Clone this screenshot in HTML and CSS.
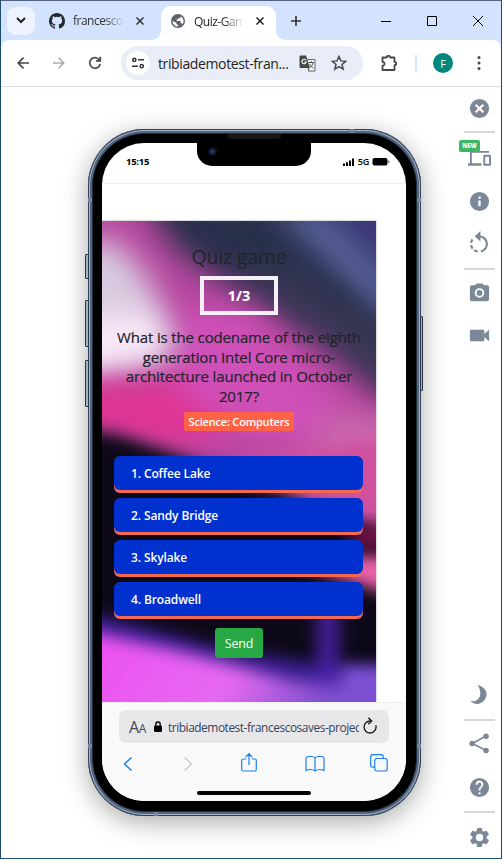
FILE: index.html
```html
<!DOCTYPE html>
<html lang="en">
<head>
<meta charset="utf-8">
<title>Quiz-Game</title>
<link rel="stylesheet" href="styles.css">
</head>
<body>
<div class="window">
  <header class="tabs">
    <button class="tab-search"><svg width="10" height="7" viewBox="0 0 10 7"><path d="M1 1l4 4 4-4" fill="none" stroke="#1f1f1f" stroke-width="2"/></svg></button>
    <div class="tab">
      <svg width="16" height="16" viewBox="0 0 16 16"><path fill="#24292f" d="M8 0C3.58 0 0 3.58 0 8c0 3.54 2.29 6.53 5.47 7.59.4.07.55-.17.55-.38v-1.49c-2.01.37-2.53-.49-2.69-.94-.09-.23-.48-.94-.82-1.13-.28-.15-.68-.52-.01-.53.63-.01 1.08.58 1.23.82.72 1.21 1.87.87 2.33.66.07-.52.28-.87.51-1.07-1.78-.2-3.64-.89-3.64-3.95 0-.87.31-1.59.82-2.15-.08-.2-.36-1.02.08-2.12 0 0 .67-.21 2.2.82a7.6 7.6 0 0 1 4 0c1.53-1.04 2.2-.82 2.2-.82.44 1.1.16 1.92.08 2.12.51.56.82 1.27.82 2.15 0 3.07-1.87 3.75-3.65 3.95.29.25.54.73.54 1.48v2.2c0 .21.15.46.55.38A8 8 0 0 0 16 8c0-4.42-3.58-8-8-8z"/></svg>
      <span class="tab-title">francesco</span>
      <svg width="8" height="8" viewBox="0 0 8 8"><path d="M.5.5l7 7m0-7l-7 7" stroke="#333" stroke-width="1.5"/></svg>
    </div>
    <div class="tab tab-active">
      <svg width="14" height="14" viewBox="0 0 24 24"><path fill="#5f6368" d="M12 0a12 12 0 1 0 0 24 12 12 0 0 0 0-24zM2.4 12l6.9 3v2l3 2.4v2.2A9.600 9.600 0 0 1 2.400 12zm17.600 5.400c-.5-1-1.300-1.600-2.300-1.600h-1.200v-3.600H9.300V9.800h2.400V7.400h2.400c1.300 0 2.400-1.100 2.400-2.400v-1.300a9.600 9.600 0 0 1 3.500 13.700z"/></svg>
      <span class="tab-title">Quiz-Gam</span>
      <svg width="8" height="8" viewBox="0 0 8 8"><path d="M.5.5l7 7m0-7l-7 7" stroke="#222" stroke-width="1.5"/></svg>
    </div>
    <svg class="new-tab" width="10" height="10" viewBox="0 0 10 10"><path d="M5 0v10M0 5h10" stroke="#333" stroke-width="1.6"/></svg>
    <div class="controls">
      <svg width="10" height="10" viewBox="0 0 10 10"><path d="M0 5.500h10" stroke="#000"/></svg>
      <svg width="10" height="10" viewBox="0 0 10 10"><path d="M.5.5h9v9h-9z" fill="none" stroke="#000"/></svg>
      <svg width="10" height="10" viewBox="0 0 10 10"><path d="M0 0l10 10M10 0L0 10" stroke="#000"/></svg>
    </div>
  </header>
  <nav class="bar">
    <svg width="12" height="12" viewBox="0 0 12 12"><path d="M6.500.7L1.200 6l5.300 5.300M1.200 6H12" fill="none" stroke="#474747" stroke-width="1.700"/></svg>
    <svg class="forward" width="12" height="12" viewBox="0 0 12 12"><path d="M5.500.7L10.800 6l-5.300 5.300M10.800 6H0" fill="none" stroke="#aaa" stroke-width="1.500"/></svg>
    <svg class="reload" width="14" height="14" viewBox="0 0 14 14"><path d="M11.700 4.500A5.300 5.300 0 1 0 12.200 8M12.300.8v4H8.100" fill="none" stroke="#474747" stroke-width="1.700"/></svg>
    <div class="address">
      <span class="site"><svg width="12" height="12" viewBox="0 0 12 12"><g fill="none" stroke="#333" stroke-width="1.500"><circle cx="2.300" cy="2.800" r="1.600"/><path d="M6 2.800h6M0 9.200h6"/><circle cx="9.700" cy="9.200" r="1.600"/></g></svg></span>
      <span class="host">tribiademotest-fran...</span>
      <svg class="translate" width="17" height="17" viewBox="0 0 17 17"><path d="M8 4.500h8v11.500H9" fill="#f4f5fa" stroke="#666"/><path d="M1.500.5H7l4 12.500H1.500a1 1 0 0 1-1-1v-10.500a1 1 0 0 1 1-1z" fill="#474747"/><path d="M7 5.300A2.200 2.200 0 1 0 7.300 7H5.300" fill="none" stroke="#fff" stroke-width="1.100"/><path d="M9.500 7.500H15M12.300 6v1.500M14 8c-.5 2.300-2 4-3.500 5M10.800 9c.8 2 2 3 3.700 4M9 13l1 3" fill="none" stroke="#555"/></svg>
      <svg width="16" height="16" viewBox="0 0 16 16"><path d="M8 1.500l1.900 4.400 4.800.4-3.700 3.100 1.200 4.700L8 11.600l-4.200 2.500L5 9.400 1.300 6.300l4.800-.4z" fill="none" stroke="#474747" stroke-width="1.500"/></svg>
    </div>
    <svg class="ext" width="17" height="17" viewBox="0 0 17 17"><path d="M1.500 2.500h4.300a1.700 1.700 0 0 1 3.400 0h4.300v4.300a1.700 1.700 0 0 1 0 3.400V15h-12v-4.200a2 2 0 0 0 0-4z" fill="none" stroke="#474747" stroke-width="1.800" stroke-linejoin="round"/></svg>
    <i class="sep"></i>
    <span class="avatar">F</span>
    <svg width="4" height="16" viewBox="0 0 4 16"><g fill="#474747"><circle cx="2" cy="2.500" r="1.500"/><circle cx="2" cy="8" r="1.500"/><circle cx="2" cy="13.500" r="1.500"/></g></svg>
  </nav>
  <main class="stage">
    <section class="phone">
      <i class="key key-mute"></i><i class="key key-up"></i><i class="key key-down"></i><i class="key key-power"></i>
      <i class="seam seam-tr"></i><i class="seam seam-bl"></i><i class="seam seam-l1"></i><i class="seam seam-l2"></i><i class="seam seam-r1"></i><i class="seam seam-r2"></i>
      <div class="screen">
        <div class="status">
          <span class="time">15:15</span>
          <svg width="12" height="8" viewBox="0 0 12 8"><path d="M0 5.500h2V8H0zM3 4.300h2V8H3zM6 2.500h2V8H6zM9 .5h2V8H9z"/></svg>
          <span class="net">5G</span>
          <svg width="18" height="9" viewBox="0 0 18 9"><rect x=".5" y="1" width="15" height="7.500" rx="2"/><path d="M16.300 3.300q1.200.3 1.200 1.500t-1.200 1.500z" fill="#555"/></svg>
        </div>
        <div class="page">
          <article class="quiz">
            <svg class="art" width="274" height="481" viewBox="0 0 274 481" preserveAspectRatio="none">
              <defs>
                <filter id="b6" x="-50%" y="-50%" width="200%" height="200%" color-interpolation-filters="sRGB"><feGaussianBlur stdDeviation="8"/></filter>
                <filter id="b12" x="-50%" y="-50%" width="200%" height="200%" color-interpolation-filters="sRGB"><feGaussianBlur stdDeviation="15"/></filter>
                <filter id="beam" x="-200%" y="-50%" width="500%" height="200%" color-interpolation-filters="sRGB"><feGaussianBlur stdDeviation="8"/></filter>
                <linearGradient id="glow" x1="0" x2="1" y1="0" y2=".25"><stop offset="0" stop-color="#ee4df2"/><stop offset=".55" stop-color="#e66af0"/><stop offset=".85" stop-color="#8050d0"/></linearGradient>
              </defs>
              <rect width="274" height="481" fill="#29304c"/>
              <path d="M200-40H330V110L274 60z" fill="#3b3876" filter="url(#b12)"/>
              <path d="M165-20L300 110V72L220-10z" fill="#606aa8" filter="url(#b12)"/>
              <path d="M130 50L290 170V115L180 50z" fill="#3b3856" filter="url(#b12)"/>
              <path d="M-40-50L30-40 75 30 145 75 215 122 320 205V285L150 270-40 230z" fill="#b6479f" filter="url(#b12)"/>
              <path d="M75 85L150 95 240 180 220 230 60 200z" fill="#cf50b8" filter="url(#b12)"/>
              <path d="M-60 20L15 20 50 62 75 130 50 145-60 165z" fill="#d8cbe0" filter="url(#b12)"/>
              <path d="M-60 95L55 95 60 136-60 152z" fill="#fdeafa" filter="url(#b12)"/>
              <path d="M-60 166L70 160 130 210 70 225-60 200z" fill="#e03494" filter="url(#b12)"/>
              <path d="M225 190L310 200V290L200 260z" fill="#cb6aae" filter="url(#b12)"/>
              <path d="M-40 203L20 215 75 234 150 264 215 288 310 318V520H-40z" fill="#0d0918" filter="url(#b6)"/>
              <path d="M140 236L300 215V316L210 279z" fill="#cf509f" filter="url(#b6)"/>
              <path d="M180 336L300 334V376L230 355z" fill="#f062ac" filter="url(#b6)"/>
              <path d="M240 304H310V328H255z" fill="#701346" filter="url(#b6)"/>
              <path d="M-20 390L130 430 300 455V500H-20z" fill="#3c1f94" filter="url(#b6)"/>
              <path d="M214 375H238V500H214z" fill="#4a22a8" opacity=".85" filter="url(#beam)"/>
              <path d="M-20 409L80 431 190 460 300 472V520H-20z" fill="url(#glow)" filter="url(#b6)"/>
              <path d="M240 445H310V500H235z" fill="#7d50d2" filter="url(#b6)"/>
            </svg>
            <div class="content">
              <h1>Quiz game</h1>
              <div class="counter">1/3</div>
              <h2><span>What is the codename of the eighth</span><span>generation Intel Core micro-</span><span>architecture launched in October</span><span>2017?</span></h2>
              <span class="badge">Science: Computers</span>
              <ul class="answers"><li>1. Coffee Lake</li><li>2. Sandy Bridge</li><li>3. Skylake</li><li>4. Broadwell</li></ul>
              <button class="send">Send</button>
            </div>
          </article>
        </div>
        <footer class="safari">
          <div class="url"><span class="aa">A<small>A</small></span>
            <svg width="8" height="11" viewBox="0 0 8 11"><rect y="4.500" width="8" height="6.500" rx="1.200"/><path d="M1.800 5V3.200a2.200 2.200 0 0 1 4.400 0V5" fill="none" stroke="#000" stroke-width="1.300"/></svg>
            <span class="path">tribiademotest-francescosaves-projec</span>
            <svg class="again" width="14" height="17" viewBox="0 0 14 17"><path d="M12.800 8.300A6 6 0 1 1 7.500 4M5.300.800L8.700 4.100 5.300 7.300" fill="none" stroke="#111" stroke-width="1.300"/></svg>
          </div>
          <div class="tools">
            <svg width="10" height="22" viewBox="0 0 10 22"><path d="M8.500 5.500L1.500 12l7 6.500" fill="none" stroke="#1a80ef" stroke-width="1.500"/></svg>
            <svg class="next" width="10" height="22" viewBox="0 0 10 22"><path d="M1.500 5.500L8.500 12l-7 6.500" fill="none" stroke="#c7c7c9" stroke-width="1.300"/></svg>
            <svg class="share" width="16" height="22" viewBox="0 0 16 22"><path d="M5.300 7H2.200A1.500 1.500 0 0 0 .7 8.500v9A1.500 1.500 0 0 0 2.200 19h11.600a1.500 1.500 0 0 0 1.500-1.500v-9A1.500 1.500 0 0 0 13.800 7h-3.100M8 13V2M4.800 5L8 1.700 11.200 5" fill="none" stroke="#1a80ef" stroke-width="1.200"/></svg>
            <svg class="book" width="20" height="22" viewBox="0 0 20 22"><path d="M10 6v13M10 6Q9 4.500 6.500 4.500H3.300Q1 4.500 1 7v11.500q2-1 4.500-1T10 19q2-1.500 4.500-1.500t4.500 1V7q0-2.500-2.300-2.500h-3.200Q11 4.500 10 6z" fill="none" stroke="#1a80ef" stroke-width="1.200"/></svg>
            <svg class="pages" width="18" height="22" viewBox="0 0 18 22"><g fill="#f8f8f8" stroke="#1a80ef" stroke-width="1.200"><rect x=".7" y="2.700" width="12.500" height="12.500" rx="2.200"/><rect x="4.700" y="6.500" width="12.500" height="12.500" rx="2.200"/></g></svg>
          </div>
          <i class="home"></i>
        </footer>
        <div class="notch"><i class="lens"></i></div>
      </div>
      <i class="speaker"></i>
    </section>
    <aside class="side">
      <svg viewBox="0 0 24 24"><path d="M12 2a10 10 0 1 0 0 20 10 10 0 0 0 0-20z"/><path d="M8 8l8 8m0-8l-8 8" stroke="#fff" stroke-width="2.300"/></svg>
      <hr>
      <div class="devices"><svg viewBox="0 0 24 24"><path d="M4 5h18V3H4c-1.100 0-2 .9-2 2v11H0v2.500h14V16H4V5zm19 2h-6a1 1 0 0 0-1 1v9.500a1 1 0 0 0 1 1h6a1 1 0 0 0 1-1V8a1 1 0 0 0-1-1zm-1 9.500h-4V9h4z"/></svg><b>NEW</b></div>
      <svg class="info" viewBox="0 0 24 24"><path d="M12 2a10 10 0 1 0 0 20 10 10 0 0 0 0-20zm1.200 15h-2.400v-6h2.400zm0-8h-2.400V6.700h2.400z"/></svg>
      <svg class="rotate" viewBox="0 0 24 24"><path d="M12 4.500a8 8 0 0 1 1.500 15.800" fill="none" stroke="#7c8798" stroke-width="2.200"/><path d="M10.200 20.300A8 8 0 0 1 4.800 7.500" fill="none" stroke="#7c8798" stroke-width="2.200" stroke-dasharray="4 2.200"/><path d="M13-1v11L7 4.500z"/></svg>
      <hr>
      <svg class="camera" viewBox="0 0 24 24"><path d="M9 2.500L7.200 4.500H4a2 2 0 0 0-2 2V19a2 2 0 0 0 2 2h16a2 2 0 0 0 2-2V6.500a2 2 0 0 0-2-2h-3.200L15 2.500z"/><circle cx="12" cy="12.500" r="4" fill="none" stroke="#fff" stroke-width="2"/></svg>
      <svg class="video" viewBox="0 0 24 24"><path d="M17 10.500V7a1 1 0 0 0-1-1H3a1 1 0 0 0-1 1v10a1 1 0 0 0 1 1h13a1 1 0 0 0 1-1v-3.500l5 4.500V6z"/></svg>
      <span class="grow"></span>
      <svg viewBox="0 0 24 24"><path d="M10 2C19 4 22 12 17 18S5 22 2.500 18.500C10 21 17 13 10 2z"/></svg>
      <hr class="hr-share">
      <svg viewBox="0 0 24 24"><path d="M18.500 4.500L4.500 12l14 7" fill="none" stroke="#7c8798" stroke-width="1.800"/><circle cx="18.800" cy="4.500" r="2.900"/><circle cx="4.300" cy="12" r="2.900"/><circle cx="18.800" cy="19.300" r="2.900"/></svg>
      <svg class="help" viewBox="0 0 24 24"><path d="M12 2a10 10 0 1 0 0 20 10 10 0 0 0 0-20zm1 17h-2v-2h2zm2.070-7.750-.9.920C13.450 12.900 13 13.500 13 15h-2v-.5c0-1.100.45-2.100 1.170-2.830l1.240-1.260A2 2 0 1 0 10 9H8a4 4 0 1 1 7.070 2.250z"/></svg>
      <hr class="hr-gear">
      <svg viewBox="0 0 24 24"><path d="M19.430 12.980a7.800 7.800 0 0 0 0-1.960l2.110-1.650a.5.5 0 0 0 .12-.64l-2-3.460a.5.5 0 0 0-.61-.22l-2.490 1a7.300 7.300 0 0 0-1.690-.98l-.38-2.650A.49.490 0 0 0 14 2h-4a.49.490 0 0 0-.49.420l-.38 2.650c-.61.250-1.170.590-1.690.980l-2.490-1a.49.490 0 0 0-.61.220l-2 3.460a.49.490 0 0 0 .12.640l2.110 1.650a7.900 7.900 0 0 0 0 1.960l-2.110 1.650a.5.5 0 0 0-.12.640l2 3.460c.12.220.39.300.61.220l2.490-1c.52.400 1.080.730 1.690.980l.38 2.650c.03.240.24.420.49.420h4c.25 0 .46-.18.490-.42l.38-2.650a7.700 7.700 0 0 0 1.690-.98l2.490 1c.23.090.49 0 .61-.22l2-3.460a.5.5 0 0 0-.12-.64zM12 15.800a3.800 3.800 0 1 1 0-7.600 3.800 3.800 0 0 1 0 7.600z"/></svg>
    </aside>
  </main>
</div>
</body>
</html>
```
FILE: styles.css
```css
* { box-sizing: border-box; }
body { margin: 0; height: 862px; overflow: hidden; background: #fff; font-family: "Open Sans", "Noto Sans", sans-serif; }
svg { display: block; flex: none; }
button { border: 0; padding: 0; font-family: inherit; }
.window { width: 502px; height: 859px; display: flex; flex-direction: column; border: 1px solid #1c4d6b; border-top-color: #52617f; background: #d3e3fd; }

.tabs { height: 39px; display: flex; align-items: center; padding-left: 6px; flex: none; }
.tab-search { width: 28px; height: 28px; border-radius: 9px; background: #ecf3fe; display: grid; place-items: center; }
.tab { display: flex; align-items: center; padding-left: 14px; width: 119px; }
.tab-title { width: 52px; margin-left: 8px; margin-right: 11px; overflow: hidden; white-space: nowrap; font-size: 12px; letter-spacing: -.5px; color: #333; -webkit-mask-image: linear-gradient(90deg, #000 60%, transparent); mask-image: linear-gradient(90deg, #000 60%, transparent); }
.tab-active { position: relative; width: 115px; height: 34px; align-self: flex-end; padding: 0 0 4px 10px; margin-left: 7px; background: #fff; border-radius: 10px 10px 0 0; }
.tab-active .tab-title { margin-left: 9px; margin-right: 10px; color: #1f1f1f; letter-spacing: -.5px; -webkit-mask-image: linear-gradient(90deg, #000 55%, transparent 96%); mask-image: linear-gradient(90deg, #000 55%, transparent 96%); }
.tab-active::before, .tab-active::after { content: ""; position: absolute; bottom: 0; width: 9px; height: 9px; }
.tab-active::before { left: -9px; background: radial-gradient(circle at 0 0, transparent 8.500px, #fff 9px); }
.tab-active::after { right: -9px; background: radial-gradient(circle at 100% 0, transparent 8.500px, #fff 9px); }
.new-tab { margin-left: 15px; }
.controls { display: flex; gap: 36px; margin-left: 80px; }

.bar { height: 47px; flex: none; display: flex; align-items: center; background: #fff; border-radius: 8px 8px 0 0; border-bottom: 1px solid #dcdfe5; padding-left: 16px; }
.forward { margin-left: 24px; }
.reload { margin-left: 23px; }
.address { margin-left: 19px; width: 242px; height: 34px; display: flex; align-items: center; background: #e9edf7; border-radius: 17px; padding-left: 5px; }
.site { width: 24px; height: 24px; border-radius: 50%; background: #fff; display: grid; place-items: center; }
.host { width: 133px; margin-left: 8px; font-size: 14px; letter-spacing: -.38px; color: #1f1f1f; white-space: nowrap; }
.translate { margin: 0 15px 0 8px; }
.ext { margin-left: 18px; }
.sep { width: 2px; height: 16px; background: #d3e3fd; margin-left: 17px; }
.avatar { width: 20px; height: 20px; margin: 0 24px 0 16px; border-radius: 50%; background: #00897b; color: #fff; font-size: 11px; display: grid; place-items: center; }

.stage { flex: 1; display: flex; background: #fff; overflow: hidden; }
.phone { position: relative; width: 333px; height: 687px; margin: 42px 0 0 87px; padding: 14px 14px; flex: none; border-radius: 57px; background: #000; box-shadow: inset 0 0 0 1px #34435a, inset 0 0 0 2px #a4b3c7, inset 0 0 0 4px #536780, inset 0 0 0 5px #202d3d, 0 6px 26px rgba(0,0,0,.34); }
.key { position: absolute; left: -3px; width: 4px; border: 1px solid #263547; border-radius: 1px; background: #a3b4c5; }
.key-mute { top: 125px; height: 25px; }
.key-up { top: 171px; height: 47px; }
.key-down { top: 231px; height: 47px; }
.key-power { left: auto; right: -2px; top: 187px; height: 75px; width: 3px; }
.seam { position: absolute; background: #74869c; width: 4px; height: 4px; }
.seam-tr { top: 0; left: 262px; }
.seam-bl { bottom: 0; left: 66px; }
.seam-l1 { left: 0; top: 69px; }
.seam-l2 { left: 0; bottom: 68px; }
.seam-r1 { right: 0; top: 69px; }
.seam-r2 { right: 0; bottom: 68px; }
.screen { position: relative; width: 304px; height: 658px; background: #fff; border-radius: 42px; overflow: hidden; display: flex; flex-direction: column; }
.notch { position: absolute; top: 0; left: 95px; width: 114px; height: 23px; background: #000; border-radius: 0 0 15px 15px; }
.lens { position: absolute; left: 11px; top: 4px; width: 9px; height: 9px; border-radius: 50%; background: radial-gradient(circle, #303868 0 15%, #10132b 50%, #08090e); }
.speaker { position: absolute; left: 140px; top: 5px; width: 53px; height: 5px; border-radius: 0 0 3px 3px; background: #171717; }
.status { height: 41px; flex: none; display: flex; align-items: center; padding: 0 16px 3px 24px; border-bottom: 1px solid #eee; }
.time { font-size: 9.500px; font-weight: 700; letter-spacing: -.25px; margin-right: auto; }
.net { font-size: 9px; font-weight: 600; margin: 0 3px 0 3px; letter-spacing: -.2px; }
.page { flex: 1; padding-top: 37px; min-height: 0; }
.quiz { width: 274px; height: 481px; display: grid; box-shadow: 0 0 2px rgba(0,0,0,.4); }
.art, .content { grid-area: 1 / 1; min-width: 0; }
.content { z-index: 1; padding: 24px 12px 0; display: flex; flex-direction: column; align-items: center; color: #212529; }
h1 { margin: 0; font-size: 19.500px; line-height: 24px; font-weight: 400; letter-spacing: -.2px; }
.counter { width: 78px; height: 39px; margin-top: 7px; border: 4px solid #f4f0f6; display: grid; place-items: center; color: #fff; font-size: 14.500px; font-weight: 700; }
h2 { margin: 13px 0 0; font-size: 15px; font-weight: 500; line-height: 19.500px; letter-spacing: -.14px; text-align: center; -webkit-text-stroke: .2px #212529; }
h2 span { display: block; white-space: nowrap; }
.badge { margin-top: 6px; width: 110px; height: 19px; border-radius: 2px; background: #ff6347; color: #fff; font-size: 11px; line-height: 19px; font-weight: 600; letter-spacing: -.2px; text-align: center; white-space: nowrap; }
.answers { list-style: none; padding: 0; margin: 25px 0 0; align-self: flex-start; width: 249px; display: grid; gap: 8px; }
.answers li { height: 34px; padding-left: 17px; background: #0031cf; box-shadow: 0 3px #f56850; border-radius: 6px; color: #fff; font-size: 12px; line-height: 35px; font-weight: 600; letter-spacing: -.12px; }
.send { width: 48px; height: 30px; margin-top: 12px; border-radius: 3px; background: #28a745; color: #fff; font-size: 12.500px; letter-spacing: -.2px; }
.safari { height: 99px; flex: none; background: #f9f9f9; border-top: 1px solid #eee; padding: 7px 17px 0; display: flex; flex-direction: column; }
.url { height: 33px; display: flex; align-items: center; padding: 0 9px 0 10px; border-radius: 7px; background: #e7e7e9; }
.aa { width: 25px; font-size: 16px; color: #454951; letter-spacing: -.5px; }
.aa small { font-size: 12px; }
.path { width: 191px; margin-left: 6px; overflow: hidden; white-space: nowrap; font-size: 11.900px; letter-spacing: -.45px; color: #36445a; }
.again { margin-left: 4px; margin-top: -3px; }
.tools { display: flex; margin-top: 9px; padding-left: 4px; }
.next { margin-left: 50px; }
.share { margin-left: 48px; }
.book { margin-left: 48px; }
.pages { margin-left: 45px; }
.home { width: 114px; height: 4px; margin: 17px auto 0; border-radius: 2px; background: #000; }

.side { margin-left: 43px; width: 31px; display: flex; flex-direction: column; align-items: center; padding: 10px 0 9px; }
.side svg { width: 23px; height: 23px; fill: #7c8798; overflow: visible; }
.side hr { width: 31px; height: 2px; flex: none; border: 0; margin: 11px 0 15px; background: #d8d8d8; }
.devices { position: relative; }
.devices b { position: absolute; left: -9px; top: -8px; width: 21px; height: 12px; border-radius: 2px; background: #3cb865; color: #fff; font-size: 6px; line-height: 12px; font-weight: 800; text-align: center; }
.side .info { margin-top: 19px; }
.side .rotate { margin-top: 19px; }
.side .rotate + hr { margin: 13px 0 11px; }
.side .video { margin-top: 20px; }
.grow { flex: 1; }
.side .hr-share { margin: 13px 0 11px; }
.side .help { margin-top: 21px; }
.side .hr-gear { margin: 12px 0 13px; }
```
